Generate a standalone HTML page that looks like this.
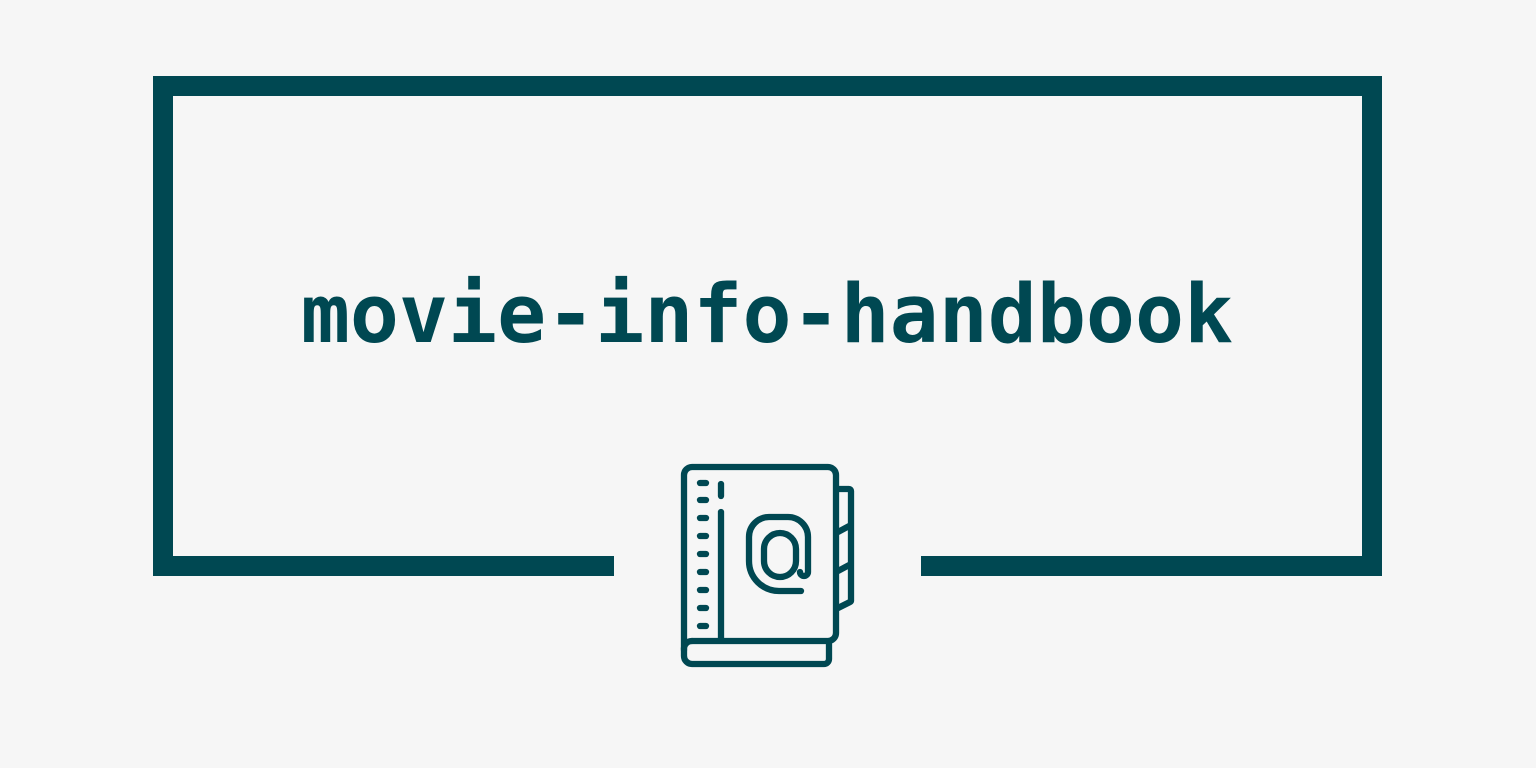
<!DOCTYPE html>
<html><head><style>
html,body{margin:0;padding:0;background:#f6f6f6;width:1536px;height:768px;overflow:hidden}
.t{position:absolute;left:0;width:1536px;top:0;height:768px}
.txt{position:absolute;left:0;width:1534px;text-align:center;top:265px;font:bold 81.5px/100px "DejaVu Sans Mono","Liberation Mono",monospace;color:#004852;white-space:nowrap}
</style></head><body>
<svg class="t" width="1536" height="768" viewBox="0 0 1536 768">
<path d="M614 566H163V86H1372V566H921" fill="none" stroke="#004852" stroke-width="20"/>
<g fill="none" stroke="#004852" stroke-width="6.3" stroke-linecap="round" stroke-linejoin="round">
<path d="M692 641H828a8 8 0 0 0 8-8V475a8 8 0 0 0-8-8H692a8 8 0 0 0-8 8V656a8 8 0 0 0 8 8H824a5 5 0 0 0 5-5V641"/>
<path d="M684 650a8 8 0 0 1 8-9"/>
<path d="M721 512V638M721 484V496"/>
<path d="M700 483H706M700 500H706M700 518H706M700 536H706M700 554H706M700 572H706M700 590H706M700 608H706M700 626H706"/>
<path d="M838 489H849a2 2 0 0 1 2 2V600a2 2 0 0 1-1 2L838 608M838 532L851 525M838 571L851 564"/>
<path d="M801 591H779a30 30 0 0 1-30-30V537a20 20 0 0 1 20-20H788a20 20 0 0 1 20 20V572a4 4 0 0 1-8 0"/>
<rect x="764" y="533" width="32" height="44" rx="16"/>
</g>
</svg>
<div class="txt">movie-info-handbook</div>
</body></html>
